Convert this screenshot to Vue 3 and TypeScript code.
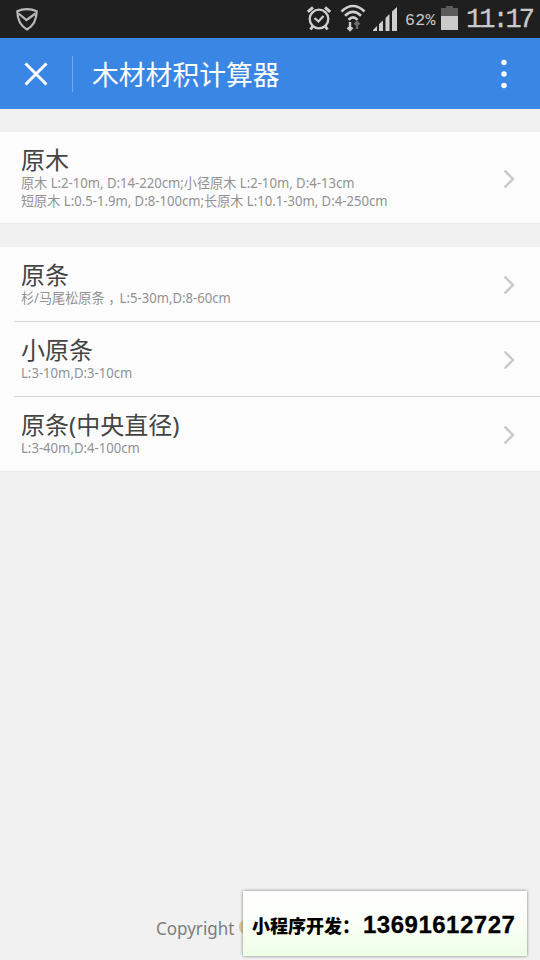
<script setup lang="ts">
interface Entry {
  title: string
  lines: string[]
}

const groups: Entry[][] = [
  [
    {
      title: '原木',
      lines: [
        '原木 L:2-10m, D:14-220cm;小径原木 L:2-10m, D:4-13cm',
        '短原木 L:0.5-1.9m, D:8-100cm;长原木 L:10.1-30m, D:4-250cm',
      ],
    },
  ],
  [
    { title: '原条', lines: ['杉/马尾松原条，L:5-30m,D:8-60cm'] },
    { title: '小原条', lines: ['L:3-10m,D:3-10cm'] },
    { title: '原条(中央直径)', lines: ['L:3-40m,D:4-100cm'] },
  ],
]

// Full-width commas get their own span so they can be centred in their cell.
const parts = (line: string): string[] => line.split(/(，)/)
</script>

<template>
  <div class="screen">
    <div class="status">
      <svg class="shield" width="22" height="23" viewBox="0 0 22 23">
        <path d="M11 1.2C8 1.2 4 2 1.3 3.3C1.4 11 4 17.500 11 21.500C18 17.500 20.600 11 20.700 3.300C18 2 14 1.200 11 1.200Z" />
        <path d="M2.500 5.500L10.500 12L19.500 5.500" />
      </svg>
      <svg class="alarm" width="26" height="26" viewBox="0 0 26 26">
        <circle cx="13" cy="14" r="9.300" />
        <path d="M8.500 13L12.500 16.500L17.500 11" />
        <path class="bells" d="M1.800 6.800L7 2.300M24.200 6.800L19 2.300M7 21L4.500 24.500M19 21L21.500 24.500" />
      </svg>
      <svg class="wifi" width="26" height="28" viewBox="0 0 26 28">
        <path d="M1.500 7.500Q13 -3.500 24.500 7.500M5 11.800Q13 4 21 11.800M8.500 15.800Q13 11 17.500 15.800" />
        <path class="down" d="M10 18V26M7.500 23.500L10 26L12.500 23.500" />
        <path class="up" d="M17 25V18M14.500 20.500L17 18L19.500 20.500" />
      </svg>
      <svg class="signal" width="24" height="24" viewBox="0 0 24 24">
        <path d="M0 24V23L4 19V24ZM6 24V17L10 13.500V24ZM12.500 24V11L16.500 7V24ZM19 24V4.500L24 0V24Z" />
      </svg>
      <span class="percent">62%</span>
      <svg class="battery" width="17" height="24" viewBox="0 0 17 24">
        <path fill="#5b5b5b" d="M5 0H12V2H17V24H0V2H5Z" />
        <path fill="#c9c9c9" d="M0 10H17V24H0Z" />
      </svg>
      <span class="clock">11:17</span>
    </div>

    <header class="bar">
      <svg class="close" width="26" height="26" viewBox="0 0 26 26">
        <path d="M2.500 2.500L23.500 23.500M23.500 2.500L2.500 23.500" />
      </svg>
      <i class="rule"></i>
      <h1>木材材积计算器</h1>
      <svg class="more" width="8" height="30" viewBox="0 0 8 30">
        <circle cx="4" cy="3.500" r="2.700" />
        <circle cx="4" cy="15" r="2.700" />
        <circle cx="4" cy="26.500" r="2.700" />
      </svg>
    </header>

    <main>
      <section v-for="(group, g) in groups" :key="g" class="group">
        <div v-for="entry in group" :key="entry.title" class="entry">
          <div class="text">
            <h2>{{ entry.title }}</h2>
            <p v-for="line in entry.lines" :key="line"><span v-for="(part, i) in parts(line)" :key="i" :class="{ comma: part === '，' }">{{ part }}</span></p>
          </div>
          <svg class="arrow" width="12" height="20" viewBox="0 0 12 20">
            <path d="M1.500 1.500L10 10L1.500 18.500" />
          </svg>
        </div>
      </section>
    </main>

    <footer>
      <span class="copyright">Copyright</span>
      <i class="dot"></i>
    </footer>
    <div class="contact">
      <span class="label">小程序开发：</span>
      <span class="phone">13691612727</span>
    </div>
  </div>
</template>

<style>
body {
  background: #f1f1f1;
}
</style>

<style scoped>
.screen {
  position: relative;
  display: flex;
  flex-direction: column;
  width: 540px;
  height: 960px;
  overflow: hidden;
  background: #f1f1f1;
  font-family: "Noto Sans", "Noto Sans CJK SC", sans-serif;
  white-space: nowrap;
}
svg {
  flex: none;
  fill: none;
  stroke: none;
}
h1, h2, p {
  margin: 0;
  font-weight: 400;
}
.status {
  display: flex;
  box-sizing: border-box;
  height: 38px;
  flex: none;
  padding-left: 16px;
  background: #1f1f1f;
  color: #c9c9c9;
}
.shield {
  margin: 8px 268px 0 0;
  stroke: #b9b9b9;
  stroke-width: 2.2;
}
.alarm {
  margin-top: 5px;
  stroke: #cfcfcf;
  stroke-width: 2.3;
}
.alarm .bells {
  stroke-width: 3;
}
.wifi {
  margin: 4px 0 0 8px;
  stroke: #cfcfcf;
  stroke-width: 2.6;
}
.wifi .down {
  stroke-width: 2.4;
}
.wifi .up {
  stroke: #6b6b6b;
  stroke-width: 2.4;
}
.signal {
  margin: 7px 0 0 7px;
  fill: #cfcfcf;
}
.percent {
  width: 35px;
  margin: 10px 0 0 8px;
  font: 16.500px/22px "Liberation Mono", monospace;
  letter-spacing: 0.400px;
}
.battery {
  margin: 6px 0 0 1px;
}
.clock {
  margin: 4px 0 0 8px;
  font: 27px/32px "Liberation Mono", monospace;
  letter-spacing: -3px;
  -webkit-text-stroke: 0.3px #c9c9c9;
}
.bar {
  display: flex;
  align-items: center;
  box-sizing: border-box;
  height: 71px;
  flex: none;
  padding: 0 32px 0 23px;
  background: #3a86e5;
  color: #fff;
}
.close {
  stroke: #fff;
  stroke-width: 3;
}
.rule {
  width: 1px;
  height: 36px;
  margin: 0 19px 0 23px;
  background: #75aaf0;
}
h1 {
  flex: 1;
  padding-top: 3px;
  font-size: 26.800px;
  line-height: 36px;
}
.more {
  fill: #fff;
}
.group {
  margin-top: 23px;
  background: #fcfcfc;
  border-bottom: 1px solid #ebebeb;
}
.entry {
  display: flex;
  align-items: center;
  box-sizing: border-box;
  margin-left: 14px;
  padding: 0 25px 0 7px;
  height: 74px;
}
.entry + .entry {
  border-top: 1px solid #d6d6d6;
  height: 75px;
}
.entry:only-child {
  height: 91px;
}
.text {
  flex: 1;
}
h2 {
  color: #444;
  font-size: 24px;
  line-height: 28px;
}
p {
  color: #929292;
  font-size: 14px;
  line-height: 18px;
  transform: scaleX(0.937);
  transform-origin: left;
}
.comma {
  position: relative;
  left: 4px;
  margin-right: 2px;
}
.arrow {
  margin-top: 2px;
  stroke: #c9c9c9;
  stroke-width: 2.4;
}
footer {
  display: flex;
  align-items: center;
  height: 24px;
  margin: auto 0 21px 156px;
}
.copyright {
  width: 79px;
  color: #7d7d7d;
  font-size: 18.500px;
  transform: scaleX(0.92);
  transform-origin: left;
}
.dot {
  width: 16px;
  height: 16px;
  margin-left: 4px;
  border-radius: 50%;
  background: #d6c690;
}
.contact {
  position: absolute;
  left: 243px;
  top: 891px;
  display: flex;
  align-items: center;
  box-sizing: border-box;
  width: 284px;
  height: 65px;
  padding: 3px 0 0 9px;
  background: linear-gradient(#fff, #fbfff7 50%, #edffe5);
  box-shadow: 0 0 3px #777;
  color: #000;
}
.label {
  width: 111px;
  font: 900 18px/26px "Noto Sans CJK SC", sans-serif;
}
.phone {
  font: 700 24px/26px "Liberation Sans", sans-serif;
  letter-spacing: 0.500px;
  -webkit-text-stroke: 0.3px #000;
}
</style>
